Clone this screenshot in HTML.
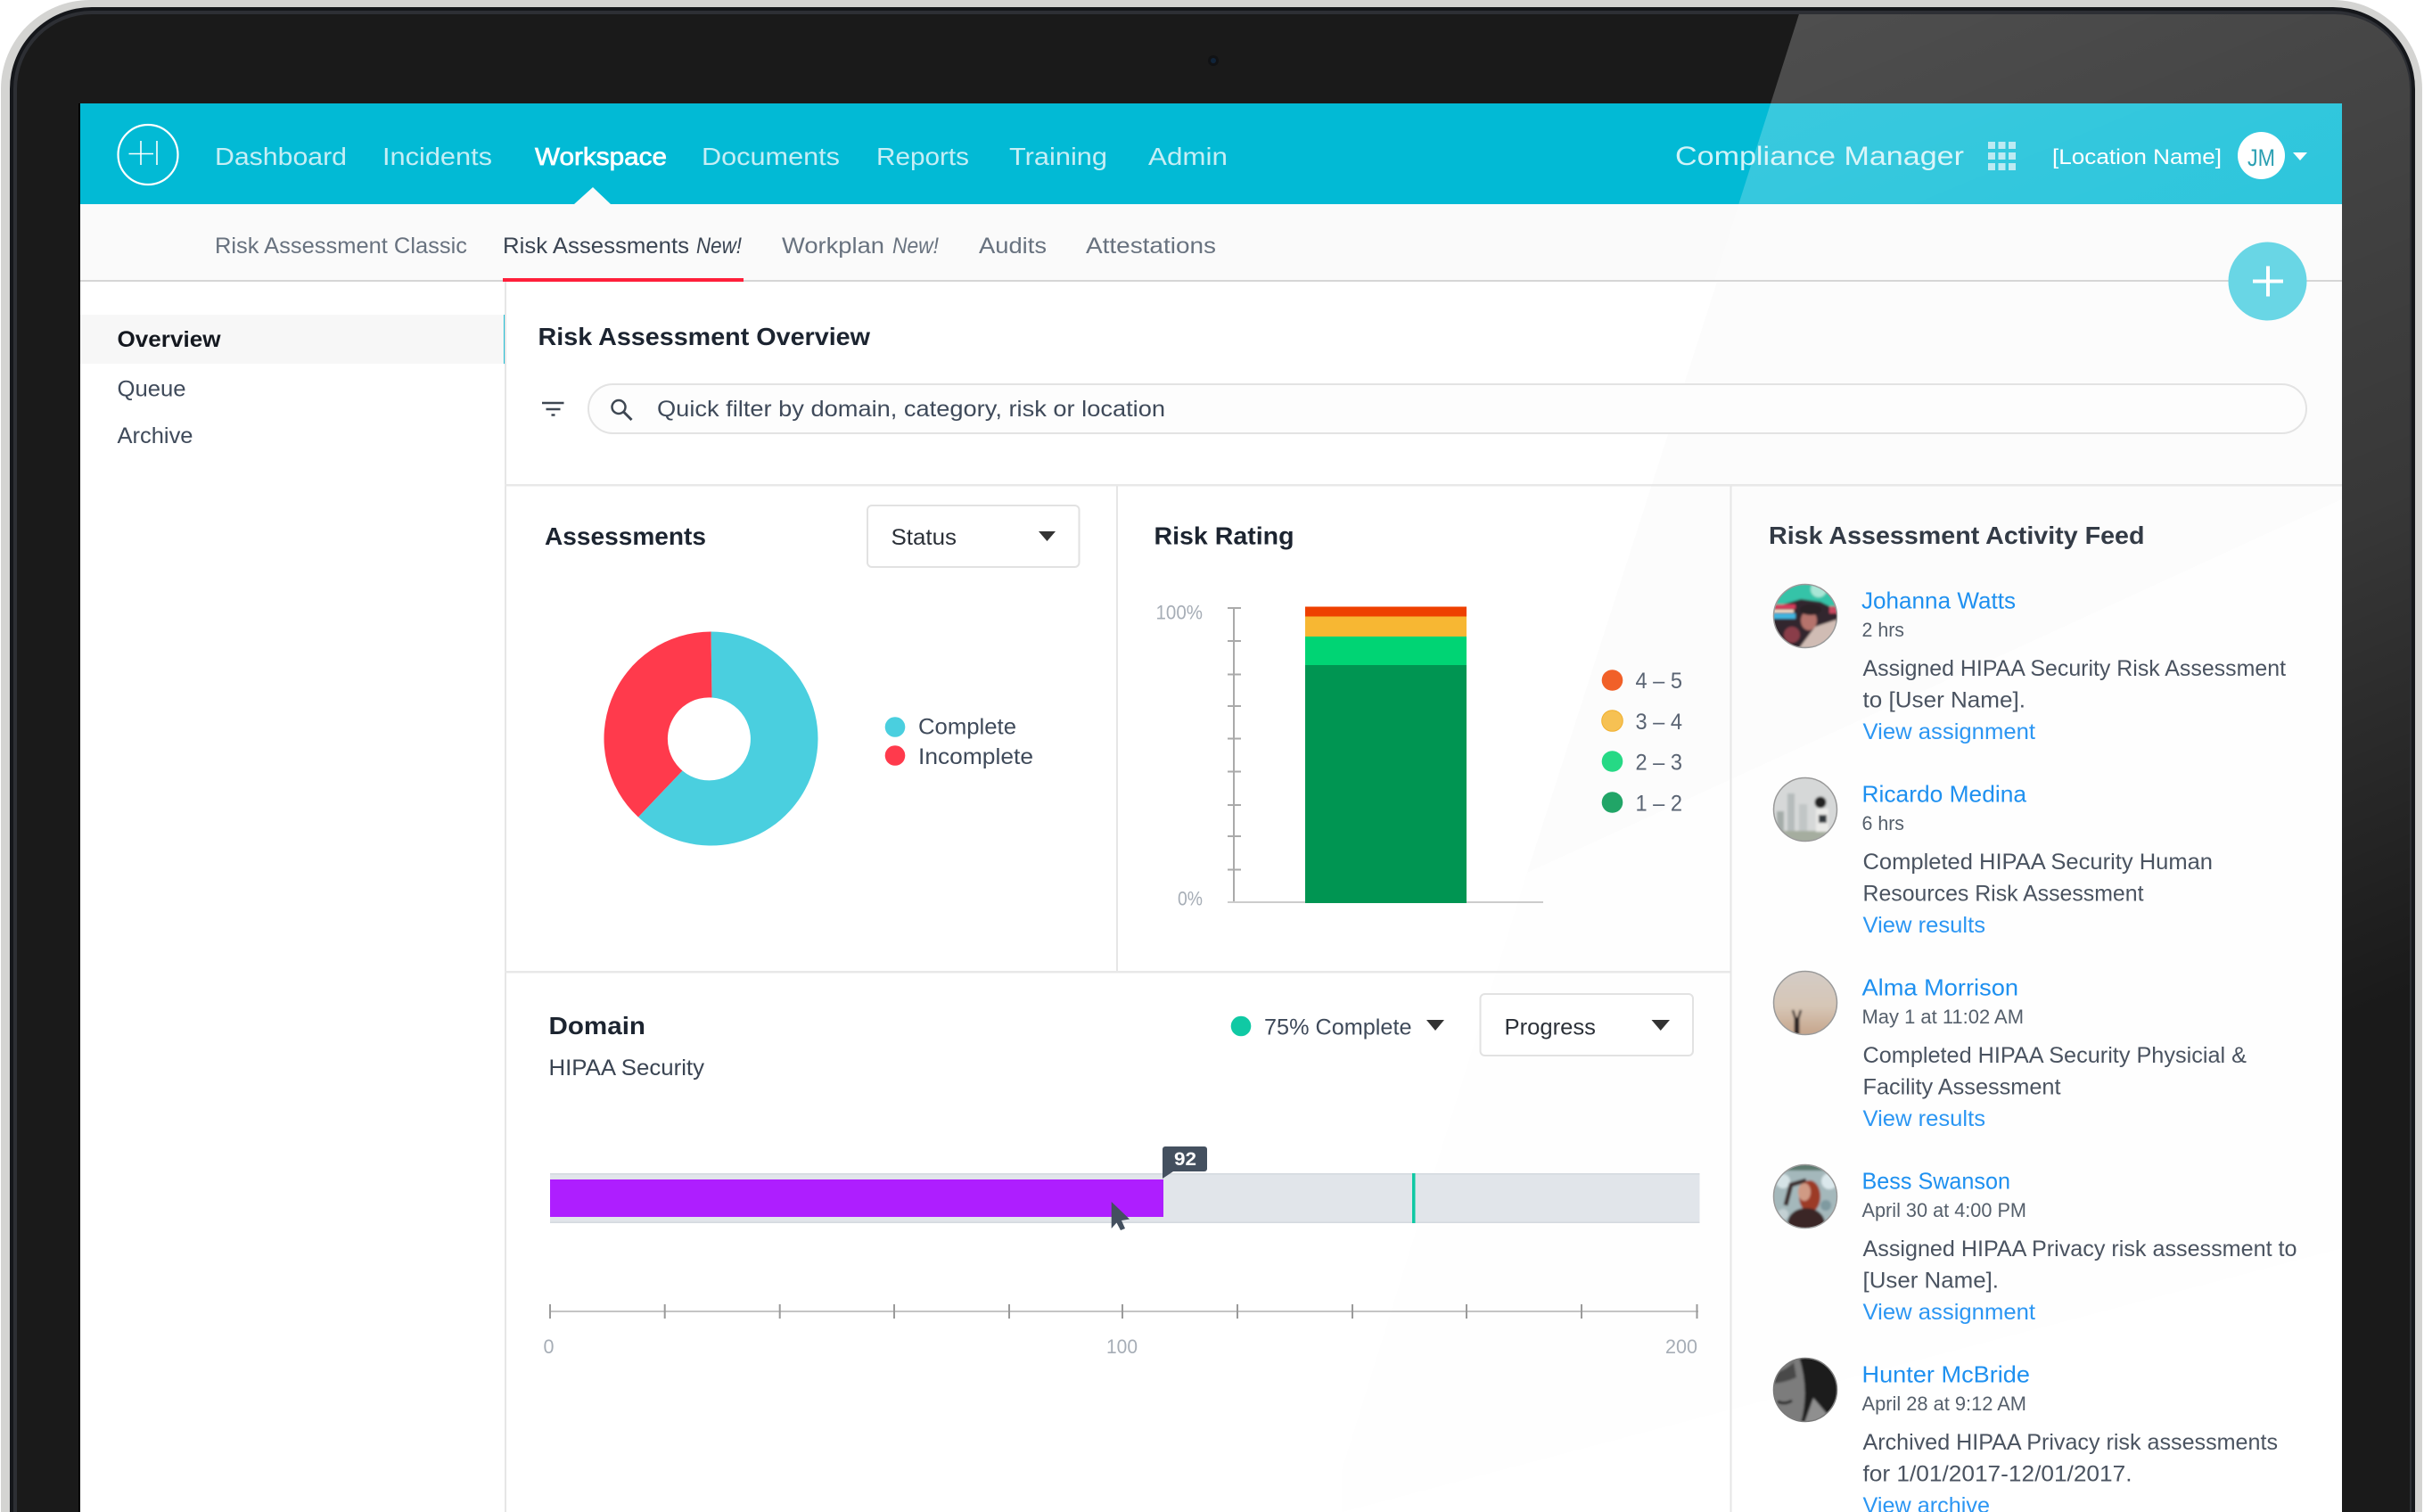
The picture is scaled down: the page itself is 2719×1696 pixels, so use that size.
<!DOCTYPE html>
<html lang="en">
<head>
<meta charset="utf-8">
<title>Compliance Manager - Risk Assessment Overview</title>
<style>
html,body{margin:0;padding:0;background:#fff;width:2719px;height:1696px;overflow:hidden}
svg{display:block}
text{font-family:"Liberation Sans",sans-serif;font-size:25px;fill:#3f4a5a}
.nav{font-size:28px;fill:#c6eef5}
.sub{fill:#68727f}
.h{font-size:28px;font-weight:bold;fill:#1c2430}
.name{fill:#1e90f0;font-size:26px}
.time{font-size:22px;fill:#555f6b}
.body{fill:#4a5360}
.link{fill:#2b96f3}
.ax{font-size:22px;fill:#a6adb6}
.dk{fill:#2b3038}
</style>
</head>
<body>
<svg xmlns="http://www.w3.org/2000/svg" width="2719" height="1696" viewBox="0 0 2719 1696">
<defs>
<clipPath id="inner"><path d="M19 1696V100A84 84 0 0 1 103 16H2619A84 84 0 0 1 2703 100V1696Z"/></clipPath>
<linearGradient id="gl" gradientUnits="userSpaceOnUse" x1="2000" y1="0" x2="2500" y2="1200">
<stop offset="0" stop-color="#fff" stop-opacity=".23"/>
<stop offset=".6" stop-color="#fff" stop-opacity=".13"/>
<stop offset="1" stop-color="#fff" stop-opacity="0"/>
</linearGradient>
<clipPath id="a1"><circle cx="2025" cy="691" r="35"/></clipPath>
<clipPath id="a2"><circle cx="2025" cy="908" r="35"/></clipPath>
<clipPath id="a3"><circle cx="2025" cy="1125" r="35"/></clipPath>
<clipPath id="a4"><circle cx="2025" cy="1342" r="35"/></clipPath>
<clipPath id="a5"><circle cx="2025" cy="1559" r="35"/></clipPath>
<filter id="b" x="-20%" y="-20%" width="140%" height="140%"><feGaussianBlur stdDeviation="1.3"/></filter>
<linearGradient id="sand" x1="0" y1="0" x2="0" y2="1"><stop offset="0" stop-color="#d3ccc7"/><stop offset=".55" stop-color="#d6c6b6"/><stop offset="1" stop-color="#c4a085"/></linearGradient>
</defs>

<!-- device -->
<rect width="2719" height="1696" fill="#fff"/>
<path d="M1 1696V100A100 100 0 0 1 101 0H2617A100 100 0 0 1 2717 100V1696Z" fill="#d4d4d2"/>
<path d="M11 1696V100A92 92 0 0 1 103 8H2617A92 92 0 0 1 2709 100V1696Z" fill="#15171b"/>
<path d="M15 1696V100A88 88 0 0 1 103 12H2617A88 88 0 0 1 2705 100V1696Z" fill="#2d2f34"/>
<path d="M19 1696V100A84 84 0 0 1 103 16H2619A84 84 0 0 1 2703 100V1696Z" fill="#1a1a1a"/>
<circle cx="1361" cy="68" r="6" fill="#111214"/>
<circle cx="1361" cy="68" r="3" fill="#10243a"/>
<rect x="88" y="116" width="2" height="1580" fill="#000"/>

<!-- screen -->
<rect x="90" y="116" width="2537" height="113" fill="#02bad5"/>
<rect x="90" y="229" width="2537" height="1467" fill="#fff"/>
<rect x="90" y="229" width="2537" height="85" fill="#fafafa"/>

<!-- gloss -->
<polygon clip-path="url(#inner)" points="2023,0 2719,0 2719,1300 1610,1300" fill="url(#gl)"/>
<polygon points="1926,316 2627,316 2627,560 1713,979" fill="#fcfcfc"/>
<polygon points="1713,979 2627,560 2627,1400 1505,1696 1505,1650" fill="#fefefe"/>

<!-- header -->
<circle cx="166" cy="173.500" r="33.500" fill="none" stroke="#fff" stroke-width="2.200"/>
<path d="M144.500 172.500H172M158 158V185M176 158V185" fill="none" stroke="#fff" stroke-width="1.600"/>
<text class="nav" x="241" y="185" textLength="148" lengthAdjust="spacingAndGlyphs">Dashboard</text>
<text class="nav" x="429" y="185" textLength="123" lengthAdjust="spacingAndGlyphs">Incidents</text>
<text class="nav" x="600" y="185" textLength="148" lengthAdjust="spacingAndGlyphs" style="fill:#fff;stroke:#fff;stroke-width:.7">Workspace</text>
<text class="nav" x="787" y="185" textLength="155" lengthAdjust="spacingAndGlyphs">Documents</text>
<text class="nav" x="983" y="185" textLength="104" lengthAdjust="spacingAndGlyphs">Reports</text>
<text class="nav" x="1132" y="185" textLength="110" lengthAdjust="spacingAndGlyphs">Training</text>
<text class="nav" x="1288" y="185" textLength="89" lengthAdjust="spacingAndGlyphs">Admin</text>
<polygon points="644,229 665,210 685,229" fill="#fafafa"/>
<text x="1879" y="185" textLength="324" lengthAdjust="spacingAndGlyphs" style="font-size:30px;fill:#fff;fill-opacity:.82">Compliance Manager</text>
<g fill="#bdeaf2">
<rect x="2230" y="159" width="8" height="8"/><rect x="2241.500" y="159" width="8" height="8"/><rect x="2253" y="159" width="8" height="8"/>
<rect x="2230" y="171" width="8" height="8"/><rect x="2241.500" y="171" width="8" height="8"/><rect x="2253" y="171" width="8" height="8"/>
<rect x="2230" y="183" width="8" height="8"/><rect x="2241.500" y="183" width="8" height="8"/><rect x="2253" y="183" width="8" height="8"/>
</g>
<text x="2302" y="184" textLength="190" lengthAdjust="spacingAndGlyphs" style="font-size:24px;fill:#fff">[Location Name]</text>
<circle cx="2536.500" cy="174.500" r="26.500" fill="#fff"/>
<text x="2521" y="186" textLength="31" lengthAdjust="spacingAndGlyphs" style="font-size:27px;fill:#2b9fb2">JM</text>
<polygon points="2572,171 2588,171 2580,180" fill="#fff"/>

<!-- subnav -->
<text class="sub" x="241" y="284" textLength="283" lengthAdjust="spacingAndGlyphs">Risk Assessment Classic</text>
<text x="564" y="284" textLength="209" lengthAdjust="spacingAndGlyphs" style="fill:#3a4452">Risk Assessments</text>
<text x="781" y="284" textLength="51" lengthAdjust="spacingAndGlyphs" style="fill:#3a4452;font-style:italic">New!</text>
<text class="sub" x="877" y="284" textLength="115" lengthAdjust="spacingAndGlyphs">Workplan</text>
<text class="sub" x="1001" y="284" textLength="52" lengthAdjust="spacingAndGlyphs" style="font-style:italic">New!</text>
<text class="sub" x="1098" y="284" textLength="76" lengthAdjust="spacingAndGlyphs">Audits</text>
<text class="sub" x="1218" y="284" textLength="146" lengthAdjust="spacingAndGlyphs">Attestations</text>
<rect x="90" y="314" width="2537" height="2" fill="#d6d6d6"/>
<rect x="564" y="312" width="270" height="4" fill="#ff1f3a"/>

<!-- sidebar -->
<rect x="90" y="353" width="475" height="55" fill="#f7f7f7"/>
<rect x="565" y="353" width="3" height="55" fill="#1fbcd3"/>
<text x="131.500" y="389" textLength="116" lengthAdjust="spacingAndGlyphs" style="font-weight:bold;fill:#14181f">Overview</text>
<text x="131.500" y="444.500" textLength="77" lengthAdjust="spacingAndGlyphs">Queue</text>
<text x="131.500" y="497" textLength="85" lengthAdjust="spacingAndGlyphs">Archive</text>

<!-- dividers -->
<rect x="566" y="316" width="2" height="1380" fill="#e6e6e6"/>
<rect x="566" y="543" width="2061" height="2.500" fill="#e8e8e8"/>
<rect x="1252" y="545" width="2" height="545" fill="#e6e6e6"/>
<rect x="566" y="1089" width="1375" height="2.500" fill="#e8e8e8"/>
<rect x="1940.500" y="545" width="2" height="1151" fill="#e6e6e6"/>

<!-- overview head -->
<text class="h" x="603.500" y="387" textLength="372.500" lengthAdjust="spacingAndGlyphs">Risk Assessment Overview</text>
<path d="M608 452H632.500M612.500 459H628.500M618.500 465.500H622.500" fill="none" stroke="#3e4752" stroke-width="2.500"/>
<rect x="660" y="431" width="1927" height="55" rx="27.500" fill="#fdfdfd" stroke="#e3e3e3" stroke-width="2"/>
<circle cx="694" cy="456.500" r="7.500" fill="none" stroke="#3e4752" stroke-width="2.500"/>
<path d="M699.500 462L708.500 471" fill="none" stroke="#3e4752" stroke-width="3"/>
<text x="737" y="467" textLength="570" lengthAdjust="spacingAndGlyphs">Quick filter by domain, category, risk or location</text>
<circle cx="2543.500" cy="315.500" r="44" fill="#69d6e5"/>
<path d="M2527 315.500H2561M2544 298.500V332.500" fill="none" stroke="#fff" stroke-width="4"/>

<!-- assessments -->
<text class="h" x="611" y="611" textLength="181" lengthAdjust="spacingAndGlyphs">Assessments</text>
<rect x="973" y="567" width="237.500" height="69" rx="5" fill="#fff" stroke="#e2e2e2" stroke-width="2"/>
<text class="dk" x="999.500" y="611" textLength="73.500" lengthAdjust="spacingAndGlyphs">Status</text>
<polygon points="1165,596 1184,596 1174.500,607" fill="#333"/>
<path d="M797.500 708.500A120 120 0 1 1 715.900 916.500L765.500 864.500A46.500 46.500 0 1 0 798.500 782.500Z" fill="#4acfdf"/>
<path d="M797.500 708.500A120 120 0 0 0 715.900 916.500L765.500 864.500A46.500 46.500 0 0 1 798.500 782.500Z" fill="#ff3a4c"/>
<circle cx="1004" cy="815.500" r="11.300" fill="#4acfdf"/>
<circle cx="1004" cy="847.500" r="11.300" fill="#ff3a4c"/>
<text x="1030" y="823.500" textLength="110" lengthAdjust="spacingAndGlyphs">Complete</text>
<text x="1030" y="857" textLength="129" lengthAdjust="spacingAndGlyphs">Incomplete</text>

<!-- risk rating -->
<text class="h" x="1294.500" y="610.500" textLength="157" lengthAdjust="spacingAndGlyphs">Risk Rating</text>
<path d="M1384 682V1012M1377 682H1392M1377 719H1392M1377 756.500H1392M1377 792H1392M1377 828.500H1392M1377 865.500H1392M1377 903H1392M1377 938H1392M1377 975.500H1392" fill="none" stroke="#aaa" stroke-width="2"/>
<path d="M1377 1012H1731" fill="none" stroke="#ccc" stroke-width="2"/>
<rect x="1464" y="680.500" width="181" height="11" fill="#ee4000"/>
<rect x="1464" y="691.500" width="181" height="23" fill="#f7b733"/>
<rect x="1464" y="714" width="181" height="32" fill="#00d474"/>
<rect x="1464" y="746" width="181" height="267" fill="#009552"/>
<text class="ax" x="1296.500" y="694.500" textLength="52.500" lengthAdjust="spacingAndGlyphs">100%</text>
<text class="ax" x="1321" y="1015.500" textLength="28" lengthAdjust="spacingAndGlyphs">0%</text>
<circle cx="1808.500" cy="763" r="11.800" fill="#f16028"/>
<circle cx="1808.500" cy="808.500" r="11.800" fill="#f6c153" stroke="#f1b02f" stroke-width="1"/>
<circle cx="1808.500" cy="854" r="11.800" fill="#26d985"/>
<circle cx="1808.500" cy="900" r="11.800" fill="#21a567"/>
<text x="1834.500" y="772" textLength="52.500" lengthAdjust="spacingAndGlyphs" style="fill:#5a6473">4 – 5</text>
<text x="1834.500" y="818" textLength="52.500" lengthAdjust="spacingAndGlyphs" style="fill:#5a6473">3 – 4</text>
<text x="1834.500" y="863.500" textLength="52.500" lengthAdjust="spacingAndGlyphs" style="fill:#5a6473">2 – 3</text>
<text x="1834.500" y="909.500" textLength="52.500" lengthAdjust="spacingAndGlyphs" style="fill:#5a6473">1 – 2</text>

<!-- domain -->
<text class="h" x="615.500" y="1160" textLength="108.500" lengthAdjust="spacingAndGlyphs">Domain</text>
<text x="615.500" y="1206" textLength="174.500" lengthAdjust="spacingAndGlyphs" style="fill:#3a4452">HIPAA Security</text>
<circle cx="1392" cy="1151" r="11.300" fill="#10c9a4"/>
<text x="1418" y="1160.500" textLength="165.500" lengthAdjust="spacingAndGlyphs">75% Complete</text>
<polygon points="1600,1144 1620,1144 1610,1156" fill="#333"/>
<rect x="1660.500" y="1115" width="238.500" height="69" rx="5" fill="#fff" stroke="#e2e2e2" stroke-width="2"/>
<text class="dk" x="1687.500" y="1160.500" textLength="102.500" lengthAdjust="spacingAndGlyphs">Progress</text>
<polygon points="1852.500,1144 1873,1144 1862.750,1156" fill="#333"/>
<rect x="617" y="1316" width="1289.500" height="56" fill="#e1e5ea"/>
<rect x="617" y="1316" width="1289.500" height="1.500" fill="#d4d9df"/>
<rect x="617" y="1370.500" width="1289.500" height="1.500" fill="#d4d9df"/>
<rect x="617" y="1323" width="688" height="42" fill="#ae1eff"/>
<rect x="1584" y="1316" width="3.500" height="56" fill="#10c9a4"/>
<rect x="1304" y="1286" width="50" height="28" rx="3" fill="#44505f"/>
<polygon points="1304,1306 1304,1322 1316,1314" fill="#44505f"/>
<text x="1317" y="1307" textLength="25" lengthAdjust="spacingAndGlyphs" style="font-size:21px;font-weight:bold;fill:#fff">92</text>
<polygon points="1246.700,1348 1267,1367.500 1258,1369 1262,1378 1257,1380 1252.500,1371.500 1246.700,1378" fill="#44505f"/>
<path d="M617 1471H1905" fill="none" stroke="#c4c4c4" stroke-width="2"/>
<path d="M617 1463V1479M745.700 1463V1479M874.700 1463V1479M1003 1463V1479M1132 1463V1479M1259 1463V1479M1388 1463V1479M1517 1463V1479M1645 1463V1479M1774 1463V1479M1903.500 1463V1479" fill="none" stroke="#9a9a9a" stroke-width="2"/>
<text class="ax" x="609.500" y="1518" textLength="12" lengthAdjust="spacingAndGlyphs">0</text>
<text class="ax" x="1241" y="1518" textLength="35" lengthAdjust="spacingAndGlyphs">100</text>
<text class="ax" x="1868" y="1518" textLength="36" lengthAdjust="spacingAndGlyphs">200</text>

<!-- feed -->
<text class="h" x="1984" y="610" textLength="421.500" lengthAdjust="spacingAndGlyphs" style="fill:#333b46">Risk Assessment Activity Feed</text>

<!-- avatar 1 -->
<g clip-path="url(#a1)"><g filter="url(#b)">
<rect x="1985" y="651" width="80" height="80" fill="#33262e"/>
<polygon points="1988,653 2064,653 2064,686 2042,675 2020,672 1990,681" fill="#35c3a8"/>
<circle cx="2040" cy="661" r="9" fill="#a9e6d6"/>
<rect x="1988" y="678" width="26" height="5" fill="#d83a5c"/>
<rect x="1988" y="684" width="24" height="3" fill="#ffe6d0"/>
<rect x="1988" y="688" width="26" height="6" fill="#3fb6e0"/>
<rect x="2052" y="680" width="12" height="8" fill="#c84a60"/>
<ellipse cx="2029" cy="696" rx="9" ry="11" fill="#b5736c"/>
<ellipse cx="2031" cy="684" rx="12" ry="6" fill="#2a2028"/>
<polygon points="2018,727 2036,703 2060,695 2062,712 2040,727" fill="#d0bcb4"/>
<ellipse cx="2010" cy="712" rx="9" ry="9" fill="#8a3d48"/>
</g></g>
<circle cx="2025" cy="691" r="35.500" fill="none" stroke="#999" stroke-width="1.500"/>

<!-- avatar 2 -->
<g clip-path="url(#a2)"><g filter="url(#b)">
<rect x="1985" y="868" width="80" height="80" fill="#d6d8d8"/>
<rect x="2005" y="890" width="8" height="46" fill="#b6bcbc"/>
<rect x="2018" y="902" width="9" height="34" fill="#c1c6c6"/>
<rect x="1993" y="910" width="8" height="26" fill="#a4aca9"/>
<rect x="1988" y="932" width="72" height="16" fill="#a5ad9f"/>
<circle cx="2042" cy="900" r="6.500" fill="#232323"/>
<rect x="2037" y="907" width="14" height="26" fill="#eaeae8"/>
<rect x="2040" y="914" width="9" height="9" fill="#33383d"/>
</g></g>
<circle cx="2025" cy="908" r="35.500" fill="none" stroke="#999" stroke-width="1.500"/>

<!-- avatar 3 -->
<g clip-path="url(#a3)"><g filter="url(#b)">
<rect x="1985" y="1085" width="80" height="80" fill="url(#sand)"/>
<rect x="2012.500" y="1141" width="6" height="22" fill="#2b2320"/>
<path d="M2011 1133L2014 1143M2020 1133L2017 1143" fill="none" stroke="#2b2320" stroke-width="2.500"/>
</g></g>
<circle cx="2025" cy="1125" r="35.500" fill="none" stroke="#999" stroke-width="1.500"/>

<!-- avatar 4 -->
<g clip-path="url(#a4)"><g filter="url(#b)">
<rect x="1985" y="1302" width="80" height="80" fill="#a4b8bb"/>
<circle cx="2000" cy="1325" r="8" fill="#d5e3e6"/>
<circle cx="2052" cy="1325" r="9" fill="#dbe8ec"/>
<circle cx="2048" cy="1352" r="6" fill="#7f9aa0"/>
<circle cx="2000" cy="1362" r="6" fill="#c3d0d3"/>
<rect x="1985" y="1302" width="80" height="11" fill="#5d7a70"/>
<path d="M2003 1352L2009 1329L2026 1324" fill="none" stroke="#3a2c2a" stroke-width="5"/>
<ellipse cx="2030" cy="1342" rx="12" ry="18" fill="#9c3a28"/>
<ellipse cx="2024" cy="1337" rx="7" ry="10" fill="#d09a84"/>
<ellipse cx="2026" cy="1372" rx="21" ry="17" fill="#3b2626"/>
</g></g>
<circle cx="2025" cy="1342" r="35.500" fill="none" stroke="#999" stroke-width="1.500"/>

<!-- avatar 5 -->
<g clip-path="url(#a5)"><g filter="url(#b)">
<rect x="1985" y="1519" width="80" height="80" fill="#1a1a1a"/>
<path d="M1985 1536Q2004 1530 2018 1522Q2030 1560 2020 1596Q2000 1592 1985 1596Z" fill="#7b7b7b"/>
<path d="M1985 1540Q2000 1540 2012 1528L2015 1545Q2000 1552 1985 1552Z" fill="#4a4a4a"/>
<polygon points="2024,1596 2034,1568 2058,1596" fill="#8f8f8f"/>
<path d="M1994 1572Q2002 1576 2010 1571" fill="none" stroke="#222" stroke-width="3"/>
</g></g>
<circle cx="2025" cy="1559" r="35.500" fill="none" stroke="#777" stroke-width="1.500"/>

<!-- feed item 1 -->
<text class="name" x="2088" y="682.500" textLength="173" lengthAdjust="spacingAndGlyphs">Johanna Watts</text>
<text class="time" x="2088.500" y="714" textLength="47.500" lengthAdjust="spacingAndGlyphs">2 hrs</text>
<text class="body" x="2089.500" y="758" textLength="474.500" lengthAdjust="spacingAndGlyphs">Assigned HIPAA Security Risk Assessment</text>
<text class="body" x="2089.500" y="793.500" textLength="182.500" lengthAdjust="spacingAndGlyphs">to [User Name].</text>
<text class="link" x="2089.500" y="829" textLength="193.500" lengthAdjust="spacingAndGlyphs">View assignment</text>

<!-- feed item 2 -->
<text class="name" x="2088.500" y="899.500" textLength="184.500" lengthAdjust="spacingAndGlyphs">Ricardo Medina</text>
<text class="time" x="2088.500" y="931" textLength="47.500" lengthAdjust="spacingAndGlyphs">6 hrs</text>
<text class="body" x="2089.500" y="975" textLength="392.500" lengthAdjust="spacingAndGlyphs">Completed HIPAA Security Human</text>
<text class="body" x="2089.500" y="1010.500" textLength="315" lengthAdjust="spacingAndGlyphs">Resources Risk Assessment</text>
<text class="link" x="2089.500" y="1046" textLength="137.500" lengthAdjust="spacingAndGlyphs">View results</text>

<!-- feed item 3 -->
<text class="name" x="2088.500" y="1116.500" textLength="175.500" lengthAdjust="spacingAndGlyphs">Alma Morrison</text>
<text class="time" x="2088.500" y="1148" textLength="181.500" lengthAdjust="spacingAndGlyphs">May 1 at 11:02 AM</text>
<text class="body" x="2089.500" y="1192" textLength="430.500" lengthAdjust="spacingAndGlyphs">Completed HIPAA Security Physicial &amp;</text>
<text class="body" x="2089.500" y="1227.500" textLength="222" lengthAdjust="spacingAndGlyphs">Facility Assessment</text>
<text class="link" x="2089.500" y="1263" textLength="137.500" lengthAdjust="spacingAndGlyphs">View results</text>

<!-- feed item 4 -->
<text class="name" x="2088.500" y="1333.500" textLength="166.500" lengthAdjust="spacingAndGlyphs">Bess Swanson</text>
<text class="time" x="2088.500" y="1365" textLength="184.500" lengthAdjust="spacingAndGlyphs">April 30 at 4:00 PM</text>
<text class="body" x="2089.500" y="1409" textLength="487" lengthAdjust="spacingAndGlyphs">Assigned HIPAA Privacy risk assessment to</text>
<text class="body" x="2089.500" y="1444.500" textLength="152.500" lengthAdjust="spacingAndGlyphs">[User Name].</text>
<text class="link" x="2089.500" y="1480" textLength="193.500" lengthAdjust="spacingAndGlyphs">View assignment</text>

<!-- feed item 5 -->
<text class="name" x="2088.500" y="1550.500" textLength="188.500" lengthAdjust="spacingAndGlyphs">Hunter McBride</text>
<text class="time" x="2088.500" y="1582" textLength="184.500" lengthAdjust="spacingAndGlyphs">April 28 at 9:12 AM</text>
<text class="body" x="2089.500" y="1626" textLength="465.500" lengthAdjust="spacingAndGlyphs">Archived HIPAA Privacy risk assessments</text>
<text class="body" x="2089.500" y="1661.500" textLength="302" lengthAdjust="spacingAndGlyphs">for 1/01/2017-12/01/2017.</text>
<text class="link" x="2089.500" y="1697" textLength="142.500" lengthAdjust="spacingAndGlyphs">View archive</text>
</svg>
</body>
</html>
